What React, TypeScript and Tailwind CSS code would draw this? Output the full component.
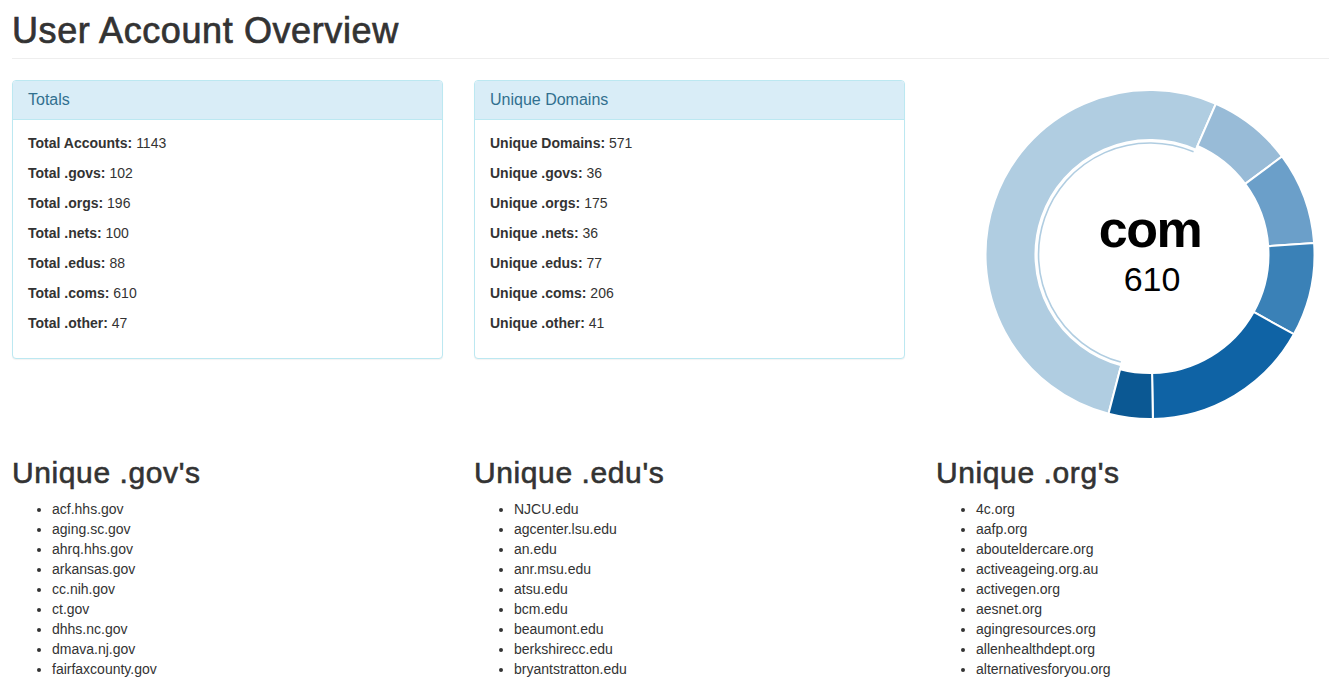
import React from "react";

type Stat = { label: string; value: number };

const totals: Stat[] = [
  { label: "Total Accounts:", value: 1143 },
  { label: "Total .govs:", value: 102 },
  { label: "Total .orgs:", value: 196 },
  { label: "Total .nets:", value: 100 },
  { label: "Total .edus:", value: 88 },
  { label: "Total .coms:", value: 610 },
  { label: "Total .other:", value: 47 },
];

const uniques: Stat[] = [
  { label: "Unique Domains:", value: 571 },
  { label: "Unique .govs:", value: 36 },
  { label: "Unique .orgs:", value: 175 },
  { label: "Unique .nets:", value: 36 },
  { label: "Unique .edus:", value: 77 },
  { label: "Unique .coms:", value: 206 },
  { label: "Unique .other:", value: 41 },
];

const lists = [
  {
    title: "Unique .gov's",
    items: [
      "acf.hhs.gov",
      "aging.sc.gov",
      "ahrq.hhs.gov",
      "arkansas.gov",
      "cc.nih.gov",
      "ct.gov",
      "dhhs.nc.gov",
      "dmava.nj.gov",
      "fairfaxcounty.gov",
    ],
  },
  {
    title: "Unique .edu's",
    items: [
      "NJCU.edu",
      "agcenter.lsu.edu",
      "an.edu",
      "anr.msu.edu",
      "atsu.edu",
      "bcm.edu",
      "beaumont.edu",
      "berkshirecc.edu",
      "bryantstratton.edu",
    ],
  },
  {
    title: "Unique .org's",
    items: [
      "4c.org",
      "aafp.org",
      "abouteldercare.org",
      "activeageing.org.au",
      "activegen.org",
      "aesnet.org",
      "agingresources.org",
      "allenhealthdept.org",
      "alternativesforyou.org",
    ],
  },
];

// angles in degrees, clockwise from 12 o'clock
const slices = [
  { name: "com", from: 194.6, to: 383.6, color: "#b0cde1", inner: 114.5 },
  { name: "edu", from: 23.6, to: 53.4, color: "#98bbd7", inner: 118.5 },
  { name: "net", from: 53.4, to: 86, color: "#6b9fc9", inner: 118.5 },
  { name: "gov", from: 86, to: 119, color: "#3a81b7", inner: 118.5 },
  { name: "org", from: 119, to: 179, color: "#0f63a5", inner: 118.5 },
  { name: "other", from: 179, to: 194.6, color: "#0b5893", inner: 118.5 },
];

const CX = 170;
const CY = 174.5;
const OUTER = 164.5;

function pt(r: number, a: number) {
  const rad = (a * Math.PI) / 180;
  return `${(CX + r * Math.sin(rad)).toFixed(2)} ${(CY - r * Math.cos(rad)).toFixed(2)}`;
}

function arcPath(r0: number, r1: number, a0: number, a1: number) {
  const large = a1 - a0 > 180 ? 1 : 0;
  return [
    `M ${pt(r1, a0)}`,
    `A ${r1} ${r1} 0 ${large} 1 ${pt(r1, a1)}`,
    `L ${pt(r0, a1)}`,
    `A ${r0} ${r0} 0 ${large} 0 ${pt(r0, a0)}`,
    "Z",
  ].join(" ");
}

function Panel({ title, stats }: { title: string; stats: Stat[] }) {
  return (
    <div className="self-start rounded-[4px] border border-[#bce8f1] bg-white shadow-[0_1px_1px_rgba(0,0,0,0.05)]">
      <div className="rounded-t-[3px] border-b border-[#bce8f1] bg-[#d9edf7] px-[15px] py-[10px] text-[16px] leading-[17.6px] text-[#31708f]">
        {title}
      </div>
      <div className="px-[15px] pt-[13px] pb-[15px]">
        {stats.map((s) => (
          <p key={s.label} className="mb-[10px] text-[14px] leading-[20px]">
            <b className="font-bold">{s.label}</b> {s.value}
          </p>
        ))}
      </div>
    </div>
  );
}

function Donut() {
  const com = slices[0];
  const thinLarge = com.to - com.from > 180 ? 1 : 0;
  return (
    <svg width={340} height={356} className="ml-[44px] block">
      {slices.map((s) => (
        <path
          key={s.name}
          d={arcPath(s.inner, OUTER, s.from, s.to)}
          fill={s.color}
          stroke="#fff"
          strokeWidth={2}
        />
      ))}
      <path
        d={`M ${pt(111.5, com.from + 0.6)} A 111.5 111.5 0 ${thinLarge} 1 ${pt(111.5, com.to - 0.6)}`}
        fill="none"
        stroke={com.color}
        strokeWidth={1.6}
      />
      <text
        x={CX}
        y={167}
        textAnchor="middle"
        fontFamily="Liberation Sans, Arial, sans-serif"
        fontWeight="bold"
        fontSize={52}
        letterSpacing={-1.5}
        fill="#000"
      >
        com
      </text>
      <text
        x={CX + 2}
        y={210.5}
        textAnchor="middle"
        fontFamily="Liberation Sans, Arial, sans-serif"
        fontSize={34}
        fill="#000"
      >
        610
      </text>
    </svg>
  );
}

export default function App() {
  return (
    <div className="h-screen w-screen overflow-hidden bg-white font-['Liberation_Sans',Arial,sans-serif] text-[#333]">
      <div className="w-[1380px] px-[12px] pt-[11px]">
        <div className="border-b border-[#eee] pb-[7px]">
          <h1 className="text-[36px] leading-[40px] font-medium tracking-[0.6px] [-webkit-text-stroke:0.7px_#333]">
            User Account Overview
          </h1>
        </div>

        <div className="mt-[21px] grid grid-cols-[431px_431px_431px] gap-x-[31px]">
          <Panel title="Totals" stats={totals} />
          <Panel title="Unique Domains" stats={uniques} />
          <div>
            <Donut />
          </div>
        </div>

        <div className="grid grid-cols-[431px_431px_431px] gap-x-[31px]">
          {lists.map((l) => (
            <div key={l.title}>
              <h2 className="mt-[20px] mb-[10px] text-[30px] leading-[33px] font-medium tracking-[0.6px] [-webkit-text-stroke:0.6px_#333]">
                {l.title}
              </h2>
              <ul className="list-disc pl-[40px]">
                {l.items.map((it) => (
                  <li key={it} className="text-[14px] leading-[20px]">
                    {it}
                  </li>
                ))}
              </ul>
            </div>
          ))}
        </div>
      </div>
    </div>
  );
}
